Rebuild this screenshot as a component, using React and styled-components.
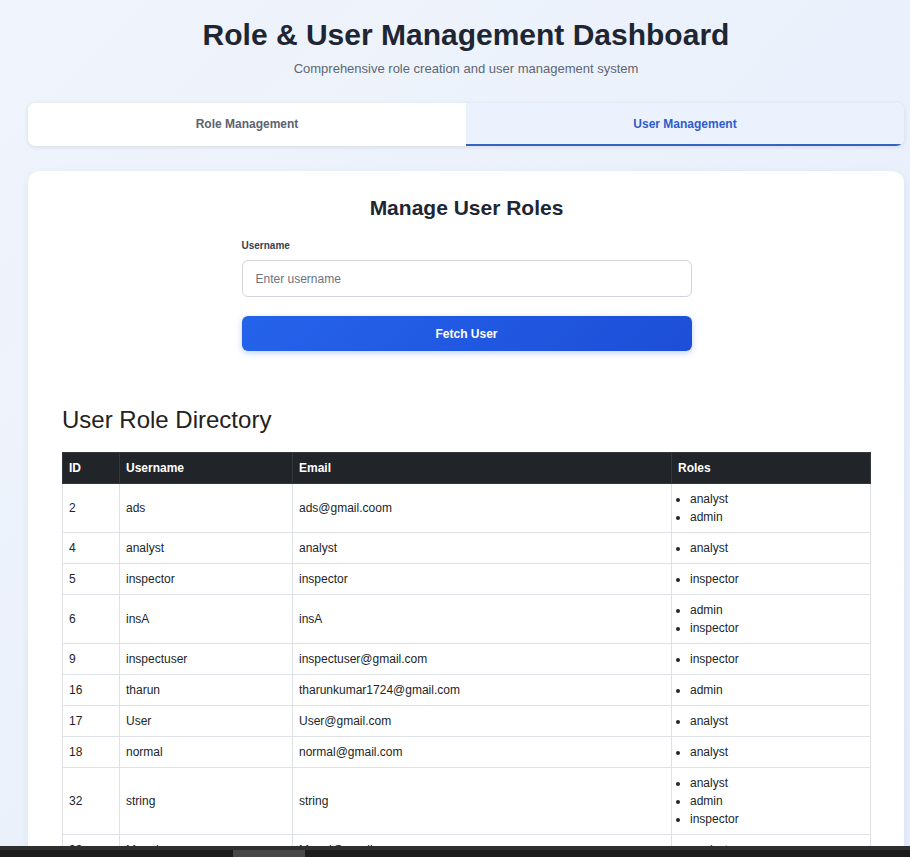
import React from "react";
import styled, { createGlobalStyle } from "styled-components";

const Global = createGlobalStyle`
  html, body { margin: 0; padding: 0; overflow: hidden; }
  body {
    font-family: "Liberation Sans", Arial, sans-serif;
    background: linear-gradient(135deg, #f0f4fb 0%, #e9f0fc 60%, #e6eefb 100%);
    min-height: 100vh;
    color: #1f2937;
  }
`;

const Page = styled.div`
  padding: 12px 6px 40px 28px;
`;

const Header = styled.header`
  text-align: center;
`;

const Title = styled.h1`
  margin: 0;
  padding-top: 3px;
  font-size: 30px;
  font-weight: 700;
  line-height: 40px;
  color: #1e2633;
`;

const Subtitle = styled.p`
  margin: 6px 0 0;
  font-size: 13px;
  line-height: 16px;
  color: #5f6773;
`;

const Tabs = styled.nav`
  margin-top: 26px;
  display: flex;
  background: #ffffff;
  border-radius: 8px;
  box-shadow: 0 1px 4px rgba(30, 41, 59, 0.12);
  overflow: hidden;
`;

const Tab = styled.button`
  flex: 1;
  height: 43px;
  border: none;
  border-bottom: 2px solid ${(p) => (p.$active ? "#3563c2" : "transparent")};
  background: ${(p) => (p.$active ? "#ebf2fd" : "#ffffff")};
  color: ${(p) => (p.$active ? "#2f5ccc" : "#5b6270")};
  font-family: inherit;
  font-size: 12px;
  font-weight: 700;
  padding: 0;
  cursor: pointer;
`;

const Card = styled.section`
  margin-top: 25px;
  background: #ffffff;
  border-radius: 12px;
  box-shadow: 0 2px 10px rgba(30, 41, 59, 0.06);
  padding: 24px 33px 40px 34px;
`;

const CardTitle = styled.h2`
  margin: 0;
  text-align: center;
  font-size: 21px;
  font-weight: 700;
  line-height: 26px;
  color: #1e2633;
`;

const Form = styled.div`
  width: 450px;
  margin: 18px auto 0;
  display: flex;
  flex-direction: column;
`;

const Label = styled.label`
  font-size: 10px;
  font-weight: 700;
  color: #374151;
  line-height: 14px;
`;

const Input = styled.input`
  margin-top: 7px;
  height: 37px;
  box-sizing: border-box;
  border: 1px solid #d1d5db;
  border-radius: 6px;
  padding: 0 13px;
  font-family: inherit;
  font-size: 12px;
  color: #1f2937;
  outline: none;
  &::placeholder { color: #6b7280; }
`;

const Button = styled.button`
  margin-top: 19px;
  height: 35px;
  border: none;
  border-radius: 6px;
  background: linear-gradient(135deg, #2563eb 0%, #1d4ed8 100%);
  color: #ffffff;
  font-family: inherit;
  font-size: 12px;
  font-weight: 700;
  box-shadow: 0 2px 6px rgba(37, 99, 235, 0.3);
  cursor: pointer;
`;

const DirTitle = styled.h2`
  margin: 54px 0 0;
  font-size: 24px;
  font-weight: 400;
  line-height: 30px;
  color: #222222;
`;

const Table = styled.table`
  margin-top: 17px;
  width: 100%;
  table-layout: fixed;
  border-collapse: collapse;
  font-size: 12px;
  color: #212529;
`;

const Th = styled.th`
  background: #212529;
  color: #ffffff;
  text-align: left;
  font-weight: 700;
  padding: 6px 6px;
  line-height: 18px;
  border: 1px solid #32383e;
`;

const Td = styled.td`
  padding: 6px 6px;
  line-height: 18px;
  border: 1px solid #dee2e6;
  vertical-align: middle;
`;

const RoleList = styled.ul`
  margin: 0;
  padding-left: 12px;
  list-style: disc;
`;

const BottomBar = styled.div`
  position: fixed;
  left: 0;
  right: 0;
  bottom: 0;
  height: 11px;
  background: #1c1c1c;
  border-top: 4px solid #2f2f2f;
  box-sizing: border-box;
`;

const BarTab = styled.div`
  position: absolute;
  left: 233px;
  top: 0;
  width: 72px;
  height: 7px;
  background: #474747;
`;

const users = [
  { id: 2, username: "ads", email: "ads@gmail.coom", roles: ["analyst", "admin"] },
  { id: 4, username: "analyst", email: "analyst", roles: ["analyst"] },
  { id: 5, username: "inspector", email: "inspector", roles: ["inspector"] },
  { id: 6, username: "insA", email: "insA", roles: ["admin", "inspector"] },
  { id: 9, username: "inspectuser", email: "inspectuser@gmail.com", roles: ["inspector"] },
  { id: 16, username: "tharun", email: "tharunkumar1724@gmail.com", roles: ["admin"] },
  { id: 17, username: "User", email: "User@gmail.com", roles: ["analyst"] },
  { id: 18, username: "normal", email: "normal@gmail.com", roles: ["analyst"] },
  { id: 32, username: "string", email: "string", roles: ["analyst", "admin", "inspector"] },
  { id: 33, username: "Manoj", email: "Manoj@gmail.com", roles: ["analyst"] },
];

export default function App() {
  return (
    <>
      <Global />
      <Page>
        <Header>
          <Title>Role &amp; User Management Dashboard</Title>
          <Subtitle>Comprehensive role creation and user management system</Subtitle>
        </Header>
        <Tabs>
          <Tab>Role Management</Tab>
          <Tab $active>User Management</Tab>
        </Tabs>
        <Card>
          <CardTitle>Manage User Roles</CardTitle>
          <Form>
            <Label htmlFor="username">Username</Label>
            <Input id="username" placeholder="Enter username" />
            <Button>Fetch User</Button>
          </Form>
          <DirTitle>User Role Directory</DirTitle>
          <Table>
            <colgroup>
              <col style={{ width: 57 }} />
              <col style={{ width: 173 }} />
              <col style={{ width: 379 }} />
              <col />
            </colgroup>
            <thead>
              <tr>
                <Th>ID</Th>
                <Th>Username</Th>
                <Th>Email</Th>
                <Th>Roles</Th>
              </tr>
            </thead>
            <tbody>
              {users.map((u) => (
                <tr key={u.id}>
                  <Td>{u.id}</Td>
                  <Td>{u.username}</Td>
                  <Td>{u.email}</Td>
                  <Td>
                    <RoleList>
                      {u.roles.map((r) => (
                        <li key={r}>{r}</li>
                      ))}
                    </RoleList>
                  </Td>
                </tr>
              ))}
            </tbody>
          </Table>
        </Card>
      </Page>
      <BottomBar>
        <BarTab />
      </BottomBar>
    </>
  );
}
